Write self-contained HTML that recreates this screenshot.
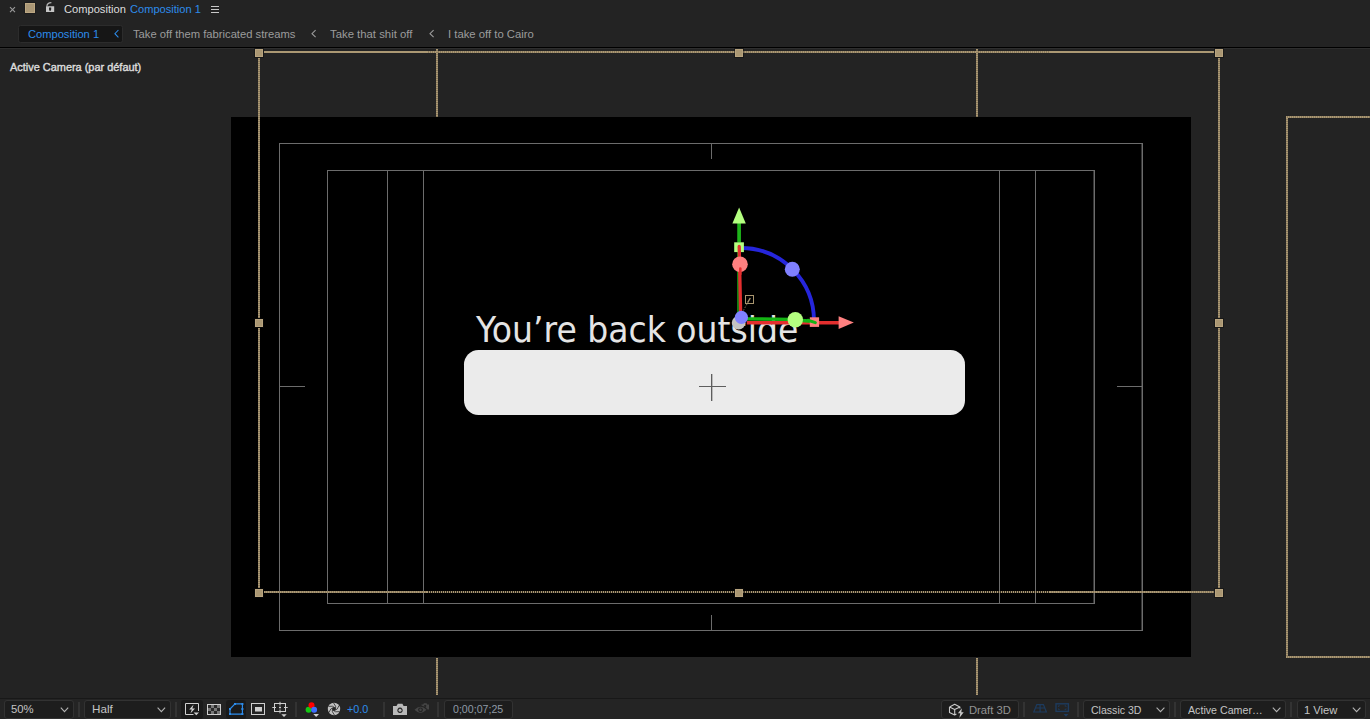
<!DOCTYPE html>
<html lang="en">
<head>
<meta charset="utf-8">
<title>Composition 1</title>
<style>
*{box-sizing:border-box;margin:0;padding:0}
html,body{width:1370px;height:719px;overflow:hidden;background:#232323}
body{position:relative;font-family:"Liberation Sans",sans-serif;font-size:11px;color:#9a9a9a}
.a{position:absolute}
.t{position:absolute;white-space:nowrap;line-height:14px;height:14px;transform-origin:0 50%}
.sl{position:absolute;background:#6c6c6c}
.sl2{position:absolute;background:#343434}
.tan{position:absolute;background:#ab9873}
.dh{position:absolute;height:2px;background:repeating-linear-gradient(90deg,#ab9873 0 1px,#8a7a5d 1px 2px)}
.dh2{position:absolute;height:2px;background:repeating-linear-gradient(90deg,#ab9873 0 1px,rgba(171,152,115,.3) 1px 2px)}
.dv{position:absolute;width:2px;background:repeating-linear-gradient(180deg,#ab9873 0 1px,#8a7a5d 1px 2px)}
.hd{position:absolute;width:8px;height:8px;background:#aa9773;border:1px solid #b8a47f;box-shadow:0 0 0 1px rgba(10,10,10,.45)}
.dd{position:absolute;top:700px;height:19px;background:#1d1d1d;border:1px solid #323232;border-radius:3px}
.sep{position:absolute;top:702px;width:2px;height:15px;background:#333}
.btn{position:absolute;top:700px;height:19px;background:#1a1a1a;border-radius:3px}
svg{position:absolute;overflow:visible}
</style>
</head>
<body>
<div class="a" style="left:0;top:0;width:1370px;height:47px;background:#232323"></div>
<div class="a" style="left:0;top:47px;width:1370px;height:1px;background:#000"></div>
<div class="a" style="left:0;top:48px;width:1370px;height:1px;background:#2e2e2e"></div>
<div class="a" style="left:0;top:49px;width:1370px;height:649px;background:#232323"></div>
<div class="a" style="left:231px;top:117px;width:960px;height:540px;background:#000"></div>
<div class="a" style="left:279px;top:143px;width:864px;height:488px;border:1px solid #6c6c6c"></div>
<div class="a" style="left:327px;top:170px;width:768px;height:434px;border:1px solid #6c6c6c"></div>
<div class="sl" style="left:387px;top:171px;width:1px;height:432px"></div>
<div class="sl" style="left:423px;top:171px;width:1px;height:432px"></div>
<div class="sl" style="left:999px;top:171px;width:1px;height:432px"></div>
<div class="sl" style="left:1035px;top:171px;width:1px;height:432px"></div>
<div class="sl2" style="left:1141px;top:144px;width:1px;height:486px"></div>
<div class="sl2" style="left:1093px;top:171px;width:1px;height:432px"></div>
<div class="sl" style="left:711px;top:144px;width:1px;height:15px"></div>
<div class="sl" style="left:711px;top:615px;width:1px;height:15px"></div>
<div class="sl" style="left:280px;top:386px;width:25px;height:1px"></div>
<div class="sl" style="left:1117px;top:386px;width:25px;height:1px"></div>
<div class="a" style="left:464px;top:350px;width:500.5px;height:64.7px;background:#ebebeb;border-radius:14.5px"></div>
<div class="a" style="left:699px;top:386px;width:27px;height:1px;background:#5e5e5e"></div>
<div class="a" style="left:711px;top:374px;width:1px;height:27px;background:#5e5e5e"></div>
<div class="a" style="left:712px;top:374px;width:1px;height:27px;background:rgba(94,94,94,.35)"></div>
<div id="big" class="a" style="left:476.4px;top:305px;height:50px;line-height:50px;white-space:nowrap;font-family:'DejaVu Sans',sans-serif;font-size:35px;color:#e4e4e4;transform-origin:0 50%;transform:scaleX(0.945)">You’re back outside</div>
<svg style="left:0;top:0" width="1370" height="719" viewBox="0 0 1370 719">
<circle cx="738.6" cy="322.8" r="6.8" fill="#c4c4c4"/>
<rect x="745.5" y="295.5" width="8" height="8" fill="none" stroke="#a8956f" stroke-width="1"/>
<path d="M750.3 298 L747.6 302.6" stroke="#a8956f" stroke-width="1.4" fill="none"/>
<path d="M747 304 L743.4 310.5" stroke="#7d6f55" stroke-width="1" stroke-dasharray="1.5 1.5" fill="none"/>
<path d="M738 252 V316" stroke="#14a014" stroke-width="1.6" fill="none"/>
<path d="M739.1 242.5 V223" stroke="#1eb41a" stroke-width="3.7" fill="none"/>
<path d="M739.1 207.6 L745.8 223.4 H732.4 Z" fill="#b4ff80"/>
<path d="M741 248 A73 73 0 0 1 814 321" stroke="#2626dc" stroke-width="3.9" fill="none"/>
<rect x="734.2" y="242.3" width="9.7" height="9.8" fill="#b4ff80"/>
<path d="M746.8 322.8 H839" stroke="#e42e2e" stroke-width="3.6" fill="none"/>
<path d="M746.8 318.8 L790 319.3 L808 321 L815 322.4" stroke="#14b414" stroke-width="3.3" fill="none" stroke-linejoin="round" stroke-linecap="round"/>
<rect x="809.8" y="317.3" width="9.3" height="9.6" fill="#ff8080"/>
<path d="M808 320.2 L815.4 322.6" stroke="#14b414" stroke-width="3" fill="none" stroke-linecap="round"/>
<path d="M853.8 322.6 L838.6 316.2 V329.1 Z" fill="#ff8080"/>
<path d="M739.2 246.5 L740.6 312" stroke="#e42e2e" stroke-width="3.3" fill="none" stroke-linecap="round"/>
<circle cx="740" cy="264.3" r="7.8" fill="#ff8080"/>
<path d="M740.3 268.5 V274" stroke="#e42e2e" stroke-width="2.6" fill="none" stroke-linecap="round"/>
<circle cx="792.3" cy="269.3" r="7.5" fill="#8080ff"/>
<circle cx="795.3" cy="319.8" r="7.7" fill="#b4ff80"/>
<circle cx="741.4" cy="317.3" r="6.6" fill="#8080ff"/>
</svg>
<div class="tan" style="left:264px;top:51px;width:163px;height:2px"></div>
<div class="dh" style="left:427px;top:51px;width:623px;height:2px"></div>
<div class="tan" style="left:1050px;top:51px;width:164px;height:2px"></div>
<div class="dh" style="left:264px;top:591px;width:163px;height:2px"></div>
<div class="dh2" style="left:427px;top:591px;width:623px;height:2px"></div>
<div class="dh" style="left:1050px;top:591px;width:164px;height:2px"></div>
<div class="dv" style="left:258px;top:58px;width:2px;height:260px"></div>
<div class="dv" style="left:258px;top:328px;width:2px;height:260px"></div>
<div class="dv" style="left:1218px;top:58px;width:2px;height:260px"></div>
<div class="dv" style="left:1218px;top:328px;width:2px;height:260px"></div>
<div class="dv" style="left:436px;top:49px;width:2px;height:68px"></div>
<div class="dv" style="left:436px;top:658px;width:2px;height:37px"></div>
<div class="dv" style="left:976px;top:49px;width:2px;height:68px"></div>
<div class="dv" style="left:976px;top:658px;width:2px;height:37px"></div>
<div class="dh" style="left:1286px;top:116px;width:84px;height:2px"></div>
<div class="dh" style="left:1286px;top:656px;width:84px;height:2px"></div>
<div class="dv" style="left:1286px;top:118px;width:2px;height:538px"></div>
<div class="hd" style="left:255px;top:49px"></div>
<div class="hd" style="left:735px;top:49px"></div>
<div class="hd" style="left:1215px;top:49px"></div>
<div class="hd" style="left:255px;top:319px"></div>
<div class="hd" style="left:1215px;top:319px"></div>
<div class="hd" style="left:255px;top:589px"></div>
<div class="hd" style="left:735px;top:589px"></div>
<div class="hd" style="left:1215px;top:589px"></div>
<svg style="left:0;top:0" width="240" height="46" viewBox="0 0 240 46">
<path d="M10 7.1 L15 12.1 M15 7.1 L10 12.1" stroke="#9a9a9a" stroke-width="1.1" fill="none"/>
<rect x="24" y="2" width="12" height="12" fill="#1d1d1d"/>
<rect x="25.5" y="3.5" width="9" height="9" fill="#ab9876" stroke="#bda883" stroke-width="1"/>
<path d="M46 6.3 H54.2 V12 H46 Z M49 7.6 H51.2 V9.2 L50.8 10.7 H49.4 L49 9.2 Z" fill="#c6c6c6" fill-rule="evenodd"/>
<path d="M46.9 6.5 C46.9 4 48.6 2.7 51.4 2.6" stroke="#b4b4b4" stroke-width="1.2" fill="none"/>
<path d="M211 6.5 H219 M211 9.5 H219 M211 12.5 H219" stroke="#c8c8c8" stroke-width="1.2" fill="none"/>
<rect x="18.5" y="25.5" width="104" height="17" rx="2" fill="#161616" stroke="#2c2c2c" stroke-width="1"/>
<path d="M118.4 30 L114.9 33.7 L118.4 37.4" stroke="#2d8ceb" stroke-width="1.05" fill="none"/>
</svg>
<svg style="left:300px;top:24px" width="150" height="20" viewBox="300 24 150 20">
<path d="M315.6 30.2 L312 33.7 L315.6 37.2" stroke="#9c9c9c" stroke-width="1.1" fill="none"/>
<path d="M433.6 30.2 L430 33.7 L433.6 37.2" stroke="#9c9c9c" stroke-width="1.1" fill="none"/>
</svg>
<div class="a" style="left:0;top:698px;width:1370px;height:1px;background:#181818"></div>
<div class="a" style="left:0;top:699px;width:1370px;height:20px;background:#242424"></div>
<div class="dd" style="left:4px;width:70px"></div>
<div class="sep" style="left:78px"></div>
<div class="dd" style="left:84px;width:87px"></div>
<div class="sep" style="left:175px"></div>
<div class="btn" style="left:181px;width:22px"></div>
<div class="btn" style="left:226px;width:20px"></div>
<div class="sep" style="left:295px"></div>
<div class="sep" style="left:383px"></div>
<div class="sep" style="left:437px"></div>
<div class="dd" style="left:444px;width:69px"></div>
<div class="dd" style="left:941px;width:78px"></div>
<div class="sep" style="left:1023px"></div>
<div class="sep" style="left:1077px"></div>
<div class="dd" style="left:1083px;width:87px"></div>
<div class="sep" style="left:1174px"></div>
<div class="dd" style="left:1180px;width:106px"></div>
<div class="sep" style="left:1290px"></div>
<div class="dd" style="left:1297px;width:69px"></div>
<svg style="left:0;top:698px" width="1370" height="21" viewBox="0 698 1370 21">
<path d="M60.8 707.6 L64.5 711.6 L68.2 707.6" stroke="#b2b2b2" stroke-width="1.1" fill="none"/>
<path d="M157.6 707.6 L161.35 711.6 L165.1 707.6" stroke="#b2b2b2" stroke-width="1.1" fill="none"/>
<path d="M1156.6 707.6 L1160.5 711.6 L1164.4 707.6" stroke="#b2b2b2" stroke-width="1.1" fill="none"/>
<path d="M1272.8 707.6 L1276.6 711.6 L1280.4 707.6" stroke="#b2b2b2" stroke-width="1.1" fill="none"/>
<path d="M1352.8 707.6 L1356.6 711.6 L1360.4 707.6" stroke="#b2b2b2" stroke-width="1.1" fill="none"/>
<path d="M193.5 714.5 H185.5 V703.5 H198.5 V711" stroke="#cfcfcf" stroke-width="1" fill="none"/>
<path d="M193.6 704.6 L189.2 709.6 H191.8 L190.4 713.6 L195 708.4 H192.3 Z" fill="#cfcfcf"/>
<path d="M193.6 712.4 H199 L196.3 715.2 Z" fill="#cfcfcf"/>
<rect x="207.5" y="704.5" width="13" height="10" fill="#2a2a2a" stroke="#cfcfcf" stroke-width="1"/>
<path d="M211 705h3v3h-3zM217 705h3v3h-3zM208 708h3v3h-3zM214 708h3v3h-3zM211 711h3v3h-3zM217 711h3v3h-3z" fill="#787878"/>
<path d="M235 703.9 H242.4 V714.1 H230 V709 Z" stroke="#2d8ceb" stroke-width="1.2" fill="none"/>
<path d="M234 702.9h2v2h-2zM241.4 702.9h2v2h-2zM241.4 713.1h2v2h-2zM229 713.1h2v2h-2zM229 708h2v2h-2zM241.4 708h2v2h-2z" fill="#2d8ceb"/>
<rect x="251.5" y="703.5" width="13" height="11" fill="none" stroke="#cfcfcf" stroke-width="1"/>
<rect x="255" y="707" width="7" height="4.5" fill="#cfcfcf"/>
<rect x="274.5" y="703.5" width="11" height="8" fill="none" stroke="#cfcfcf" stroke-width="1"/>
<path d="M280 701.8 V705.5 M280 709.5 V713.3 M272.3 707.5 H276 M284 707.5 H287.7 M279 707.5 H281 M280 706.5 V708.5" stroke="#cfcfcf" stroke-width="1" fill="none"/>
<path d="M281.3 714.2 H286.7 L284 717 Z" fill="#cfcfcf"/>
<circle cx="308.6" cy="709.8" r="3" fill="#14c814"/><circle cx="311.5" cy="705.3" r="3" fill="#ff0000"/><circle cx="314.1" cy="709.7" r="3" fill="#3c6eff"/>
<path d="M313.3 714 H319 L316.15 717.1 Z" fill="#cfcfcf"/>
<circle cx="334.0" cy="709.0" r="6.2" fill="#c2c2c2"/>
<path d="M339.62 711.62 Q335.01 712.77 332.61 709.98 M334.54 715.18 Q331.24 711.76 332.46 708.28 M328.92 712.56 Q330.23 707.99 333.85 707.31 M328.38 706.38 Q332.99 705.23 335.39 708.02 M333.46 702.82 Q336.76 706.24 335.54 709.72 M339.08 705.44 Q337.77 710.01 334.15 710.69" stroke="#2a2a2a" stroke-width="0.8" fill="none"/>
<circle cx="334.0" cy="709.0" r="1.7" fill="#262626"/>
<path d="M393 706 H396.5 L397.8 703.8 H402.4 L403.6 706 H407 V715 H393 Z M400 707.6 A2.7 2.7 0 1 0 400.01 707.6 Z" fill="#b9b9b9" fill-rule="evenodd"/>
<circle cx="400" cy="710.3" r="1.5" fill="#b9b9b9"/>
<path d="M414.5 709.8 Q420.5 703.6 426.5 709.8 Q420.5 716 414.5 709.8 Z M420.5 707.4 A2.4 2.4 0 1 0 420.51 707.4 Z" fill="#454545" fill-rule="evenodd"/>
<circle cx="420.5" cy="709.8" r="1.2" fill="#454545"/>
<path d="M421.5 704.6 H423.2 L423.8 703.2 H426.6 L427.2 704.6 H429 V709.4 H427.6 Q425.6 706.2 421.5 705.6 Z M425.2 704.8 A1.1 1.1 0 1 0 425.21 704.8 Z" fill="#454545" fill-rule="evenodd"/>
<path d="M949.5 707.1 L954.7 704.3 L959.9 707.1 V708.6 M949.5 707.1 V712.4 L954.7 715 V709.6 L949.5 707.1 M954.7 709.6 L959.9 707.1 M954.7 715 L956.4 714.1" stroke="#c9c9c9" stroke-width="1.1" fill="none" stroke-linejoin="round"/>
<path d="M961.9 708.2 L957.9 713.2 H960.3 L959.3 717.9 L963.7 712.2 H961.3 Z" fill="#c9c9c9"/>
<path d="M1036.8 704.6 H1043.4 L1046.4 712 H1033.8 Z M1040.1 704.6 V712 M1035.4 708 H1044.8" stroke="#1d3b5e" stroke-width="1.2" fill="none"/>
<rect x="1056" y="703.8" width="12.4" height="7.6" fill="none" stroke="#1d3b5e" stroke-width="1.4"/>
<path d="M1058.4 707 V705.8 H1059.8 M1064.6 705.8 H1066 V707 M1058.4 708.4 V709.6 H1059.8 M1064.6 709.6 H1066 V708.4" stroke="#1d3b5e" stroke-width="0.9" fill="none"/>
<path d="M1063.6 714 H1068.4 L1066 716.8 Z" fill="#1d3b5e"/>
</svg>
<div id="h1" class="t" style="left:64.34px;top:2.30px;color:#dedede;transform:scaleX(1.0111)">Composition</div>
<div id="h2" class="t" style="left:129.89px;top:2.30px;color:#2d8ceb;transform:scaleX(1.0070)">Composition 1</div>
<div id="h3" class="t" style="left:27.81px;top:27.00px;color:#2d8ceb;transform:scaleX(1.0109)">Composition 1</div>
<div id="h4" class="t" style="left:132.81px;top:27.00px;color:#9c9c9c;transform:scaleX(1.0193)">Take off them fabricated streams</div>
<div id="h5" class="t" style="left:330.38px;top:27.00px;color:#9c9c9c;transform:scaleX(1.0307)">Take that shit off</div>
<div id="h6" class="t" style="left:447.52px;top:27.00px;color:#9c9c9c;transform:scaleX(1.0277)">I take off to Cairo</div>
<div id="h7" class="t" style="left:9.98px;top:60.00px;color:#dcdcdc;-webkit-text-stroke:0.4px #dcdcdc;transform:scaleX(0.9939)">Active Camera (par défaut)</div>
<div id="f1" class="t" style="left:10.57px;top:702.30px;color:#c4c4c4;transform:scaleX(1.0279)">50%</div>
<div id="f2" class="t" style="left:91.58px;top:702.30px;color:#c4c4c4;transform:scaleX(1.0599)">Half</div>
<div id="f3" class="t" style="left:347.04px;top:702.20px;color:#2d8ceb;transform:scaleX(0.9835)">+0.0</div>
<div id="f4" class="t" style="left:452.70px;top:702.20px;color:#8f9aa6;transform:scaleX(0.9658)">0;00;07;25</div>
<div id="f5" class="t" style="left:968.66px;top:703.20px;color:#939393;transform:scaleX(1.0222)">Draft 3D</div>
<div id="f6" class="t" style="left:1091.00px;top:703.20px;color:#c4c4c4;transform:scaleX(0.9593)">Classic 3D</div>
<div id="f7" class="t" style="left:1188.13px;top:703.20px;color:#c4c4c4;transform:scaleX(0.9690)">Active Camer…</div>
<div id="f8" class="t" style="left:1303.92px;top:703.20px;color:#c4c4c4;transform:scaleX(1.0181)">1 View</div>
</body>
</html>
